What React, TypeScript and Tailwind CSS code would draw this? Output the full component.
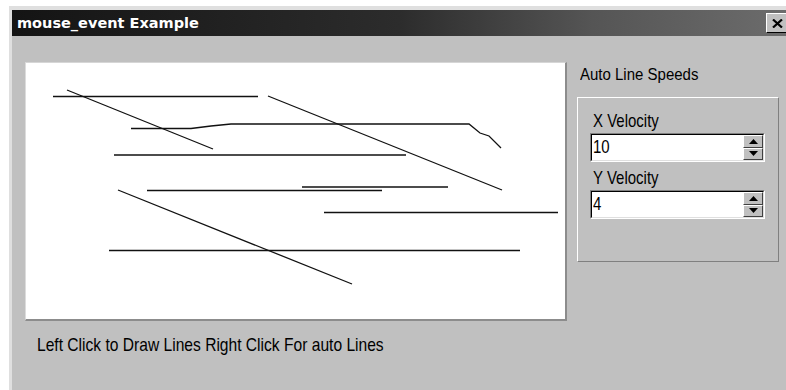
import React from "react";

const body = { fontFamily: '"Liberation Sans", Arial, sans-serif' };

function SpinHalf({ up }: { up: boolean }) {
  return (
    <div className="flex-1 flex items-center justify-center bg-[#c0c0c0] border border-t-white border-l-white border-b-[#404040] border-r-[#404040]">
      <svg width="9" height="5" viewBox="0 0 9 5">
        {up ? <polygon points="4.5,0 9,5 0,5" fill="#000" /> : <polygon points="0,0 9,0 4.5,5" fill="#000" />}
      </svg>
    </div>
  );
}

function SpinInput({ value }: { value: string }) {
  return (
    <div className="w-[175px] h-[29px] border border-t-[#808080] border-l-[#808080] border-b-white border-r-white">
      <div className="h-full flex items-stretch bg-white border border-t-black border-l-black border-b-[#dfdfdf] border-r-[#dfdfdf]">
        <div className="flex-1 flex items-center pl-[1px] text-[15px] text-black">
          <span className="inline-block scale-y-[1.18]">{value}</span>
        </div>
        <div className="w-[20px] flex flex-col">
          <SpinHalf up />
          <SpinHalf up={false} />
        </div>
      </div>
    </div>
  );
}

export default function App() {
  return (
    <div className="w-[786px] h-[390px] bg-white overflow-hidden pl-[9px] pt-[6px]" style={body}>
      <div className="h-full flex flex-col border-l-[3px] border-t-[4px] border-[#dfdfdf] bg-[#c0c0c0]">
        {/* Title bar */}
        <div className="h-[26px] shrink-0 flex items-center justify-between pl-[5px] bg-[linear-gradient(to_right,#141414,#2c2c2c_50%,#555555_75%,#6c6c6c)]">
          <span
            className="text-white font-bold text-[14.5px] leading-none"
            style={{ fontFamily: '"DejaVu Sans", Verdana, sans-serif' }}
          >
            mouse_event Example
          </span>
          <div className="w-[22px] h-[20px] mr-[-2px] shrink-0 bg-[#c0c0c0] border border-t-white border-l-white border-b-black border-r-black flex items-center justify-center">
            <svg width="11" height="9" viewBox="0 0 11 9">
              <path d="M1 0.5 L10 8.5 M10 0.5 L1 8.5" stroke="#000" strokeWidth="2.2" />
            </svg>
          </div>
        </div>

        {/* Body */}
        <div className="flex-1 flex">
          {/* Left column */}
          <div className="pl-[13px] pt-[26px] flex flex-col">
            <div className="relative w-[542px] h-[259px] bg-white border-t border-l border-t-[#d6d6d6] border-l-[#dcdcdc] border-r-2 border-b-2 border-r-[#8c8c8c] border-b-[#8c8c8c]">
              <svg className="absolute inset-0" width="539" height="256" viewBox="26 63 539 256">
                <g stroke="#111" strokeWidth="1.3" fill="none">
                  <path d="M53 96.5 H258" />
                  <path d="M67 90 L213 149" />
                  <path d="M268 96 L502 190" />
                  <polyline points="131,128.5 191,128.5 211,126 231,124 469,124 480,133 489,136 501,148" />
                  <path d="M114 155 H406" />
                  <path d="M147 190.5 H382" />
                  <path d="M302 187 H448" />
                  <path d="M118 190 L352 284" />
                  <path d="M324 212.5 H558" />
                  <path d="M109 250.5 H520" />
                </g>
              </svg>
            </div>
            <div className="mt-[13px] pl-[12px] text-[15.6px] leading-[17px] text-black">
              <span className="inline-block scale-y-[1.18] origin-top">
                Left Click to Draw Lines Right Click For auto Lines
              </span>
            </div>
          </div>

          {/* Right column */}
          <div className="ml-[10px] pt-[28px] flex flex-col">
            <div className="pl-[3px] text-[15px] leading-[17px] text-black">
              <span className="inline-block scale-y-[1.15] origin-top">Auto Line Speeds</span>
            </div>
            <div className="mt-[16px] w-[202px] h-[165px] border border-t-white border-l-white border-b-[#808080] border-r-[#808080] pt-[12px] pl-[12px]">
              <div className="pl-[3px] text-[15px] leading-[17px] text-black">
                <span className="inline-block scale-y-[1.18] origin-top">X Velocity</span>
              </div>
              <div className="mt-[6px]">
                <SpinInput value="10" />
              </div>
              <div className="mt-[5px] pl-[3px] text-[15px] leading-[17px] text-black">
                <span className="inline-block scale-y-[1.18] origin-top">Y Velocity</span>
              </div>
              <div className="mt-[6px]">
                <SpinInput value="4" />
              </div>
            </div>
          </div>
        </div>
      </div>
    </div>
  );
}
